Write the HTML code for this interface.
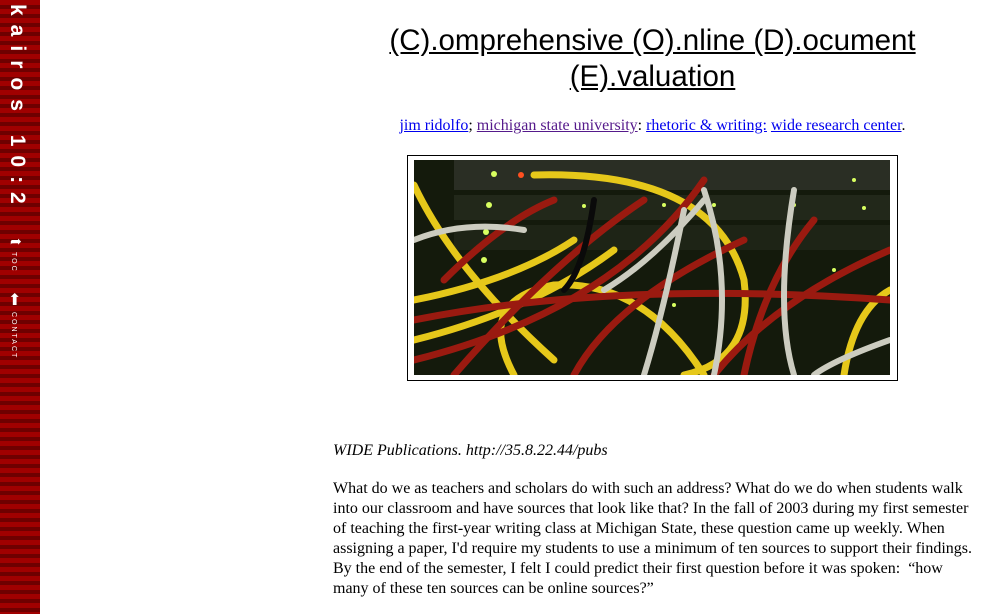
<!DOCTYPE html>
<html><head><style>
body{margin:0;width:1004px;height:614px;overflow:hidden;background:#fff;font-family:"Liberation Serif",serif;position:relative}
#side{position:absolute;left:0;top:0;width:40px;height:614px;background:repeating-linear-gradient(#a00000 0,#a00000 5px,#6e0000 5px,#6e0000 9px)}
.vt{position:absolute;color:#fff;writing-mode:vertical-rl;font-family:"Liberation Sans",sans-serif}
h1{position:absolute;left:300px;width:705px;top:23px;margin:0;text-align:center;font-weight:normal;font-size:29.5px;line-height:36px;text-decoration:underline;font-family:"Liberation Sans",sans-serif}
#links{position:absolute;left:300px;width:705px;top:117px;text-align:center;font-size:16px}
a{color:#00e}a.v{color:#551a8b}
#frame{position:absolute;left:407px;top:155px;width:489px;height:224px;border:1px solid #000}
#pic{position:absolute;left:414px;top:160px;width:476px;height:215px;background:#141a0c;overflow:hidden}
p{position:absolute;left:333px;width:645px;margin:0;font-size:16px;line-height:20px}
</style></head><body>
<div id="side">
<div class="vt" style="left:5px;top:4px;font-size:21px;font-weight:bold;letter-spacing:9px">kairos 10:2</div>
<div style="position:absolute;left:10px;top:234px;color:#fff;font-size:14px">➦</div>
<div class="vt" style="left:10px;top:252px;font-size:7px;letter-spacing:2px">TOC</div>
<div style="position:absolute;left:8px;top:293px;color:#fff;font-size:16px;line-height:16px">⬆</div>
<div class="vt" style="left:10px;top:312px;font-size:7px;letter-spacing:2px">CONTACT</div>
</div>
<h1>(C).omprehensive (O).nline (D).ocument<br>(E).valuation</h1>
<div id="links"><a href="#">jim ridolfo</a>; <a class="v" href="#">michigan state university</a>: <a href="#">rhetoric &amp; writing:</a> <a href="#">wide research center</a>.</div>
<div id="frame"></div>
<div id="pic"><svg width="476" height="215" fill="none" stroke-linecap="round">
<rect x="40" y="0" width="436" height="30" fill="#2a2e24"/>
<rect x="40" y="35" width="436" height="25" fill="#22281a"/>
<rect x="40" y="65" width="436" height="25" fill="#1e2416"/>
<g fill="#d8ff60"><circle cx="80" cy="14" r="3"/><circle cx="75" cy="45" r="3"/><circle cx="72" cy="72" r="3"/><circle cx="170" cy="46" r="2"/><circle cx="250" cy="45" r="2"/><circle cx="300" cy="45" r="2"/><circle cx="380" cy="45" r="2"/><circle cx="450" cy="48" r="2"/><circle cx="420" cy="110" r="2"/><circle cx="150" cy="140" r="2"/><circle cx="260" cy="145" r="2"/><circle cx="70" cy="100" r="3"/><circle cx="440" cy="20" r="2"/></g>
<circle cx="107" cy="15" r="3" fill="#ff5020"/>
<g stroke="#e6c81a" stroke-width="7"><path d="M0 25 Q40 110 140 200"/><path d="M0 140 Q100 120 160 80"/><path d="M0 180 Q120 150 200 90"/><path d="M100 215 Q60 140 140 125 Q230 120 290 215"/><path d="M120 15 Q300 10 330 120 Q340 200 270 215"/><path d="M476 130 Q440 150 430 215"/></g>
<g stroke="#9a1a10" stroke-width="7"><path d="M0 200 Q200 150 290 20"/><path d="M30 120 Q90 60 140 40"/><path d="M160 215 Q200 140 330 80"/><path d="M330 215 Q350 120 400 60"/><path d="M230 40 Q140 100 40 215"/><path d="M476 90 Q360 140 300 215"/><path d="M0 160 Q200 120 476 140"/></g>
<g stroke="#ccccc0" stroke-width="6"><path d="M0 80 Q50 60 110 70"/><path d="M290 30 Q320 120 300 215"/><path d="M270 50 Q250 150 230 215"/><path d="M380 30 Q360 150 380 215"/><path d="M476 180 Q420 200 400 215"/><path d="M190 130 Q240 100 290 40"/></g>
<path d="M180 40 Q170 110 150 130" stroke="#0a0a0a" stroke-width="6"/>
</svg></div>
<p style="top:441px;font-style:italic">WIDE Publications. http://35.8.22.44/pubs</p>
<p style="top:479px">What do we as teachers and scholars do with such an address? What do we do when students walk into our classroom and have sources that look like that? In the fall of 2003 during my first semester of teaching the first-year writing class at Michigan State, these question came up weekly. When assigning a paper, I'd require my students to use a minimum of ten sources to support their findings. By the end of the semester, I felt I could predict their first question before it was spoken: &nbsp;“how many of these ten sources can be online sources?”</p>
</body></html>
